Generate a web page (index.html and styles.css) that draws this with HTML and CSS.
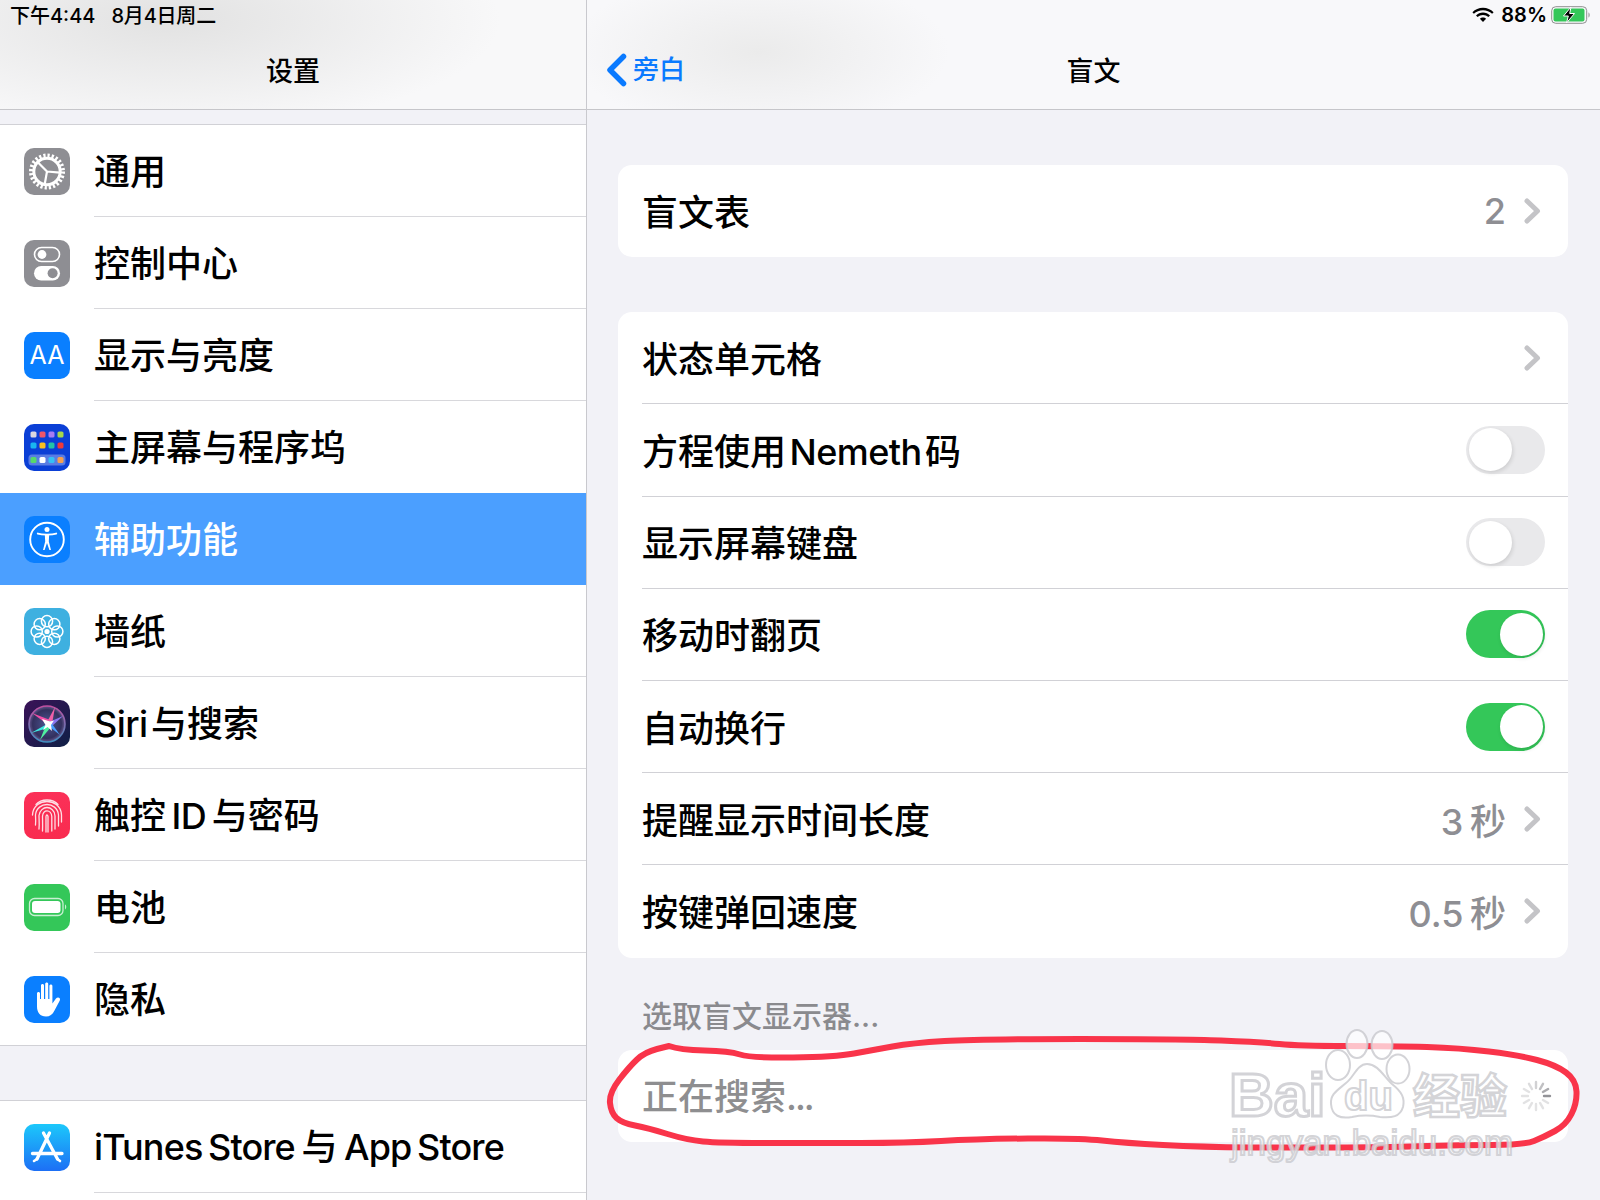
FILE: index.html
```html
<!DOCTYPE html>
<html lang="zh-CN">
<head>
<meta charset="utf-8">
<title>盲文</title>
<link rel="stylesheet" href="styles.css">
</head>
<body>
<div class="ipad">
  <aside class="sidebar">
    <header class="bar bar-left">
      <div class="status"><span>下午4:44</span><span class="date">8月4日周二</span></div>
      <div class="nav"><span class="title">设置</span></div>
    </header>
    <section class="group first">
      <div class="row">
        <svg class="icon" viewBox="0 0 46 47"><rect width="46" height="47" fill="#8e8e93"/><circle cx="23" cy="23.5" r="16" fill="none" stroke="#fff" stroke-width="4" stroke-dasharray="2.2 1.99"/><circle cx="23" cy="23.5" r="13.2" fill="none" stroke="#fff" stroke-width="3"/><path d="M23 23.5L36 24.6M23 23.5L20.7 36.3M23 23.5L13.8 14.3" stroke="#fff" stroke-width="2.200" fill="none"/></svg>
        <div class="row-body"><span class="text">通用</span></div>
      </div>
      <div class="row">
        <svg class="icon" viewBox="0 0 46 47"><rect width="46" height="47" fill="#8e8e93"/><rect x="10.5" y="7.5" width="25" height="14" rx="7" fill="none" stroke="#fff" stroke-width="1.6"/><circle cx="18" cy="14.5" r="4.4" fill="#fff"/><rect x="10" y="26" width="26" height="14.5" rx="7.2" fill="#fff"/><circle cx="28.6" cy="33.2" r="5" fill="#8e8e93"/></svg>
        <div class="row-body"><span class="text">控制中心</span></div>
      </div>
      <div class="row">
        <svg class="icon" viewBox="0 0 46 47"><rect width="46" height="47" fill="#0a7fff"/><text class="icon-aa" x="23" y="32" text-anchor="middle">AA</text></svg>
        <div class="row-body"><span class="text">显示与亮度</span></div>
      </div>
      <div class="row">
        <svg class="icon" viewBox="0 0 46 47"><rect width="46" height="47" fill="#0b3fd6"/><rect x="4.5" y="30.5" width="37" height="11" rx="3.5" fill="#fff" opacity=".32"/><g><rect x="6.5" y="7.5" width="6" height="6" rx="1.6" fill="#d8d8e0"/><rect x="15.5" y="7.5" width="6" height="6" rx="1.6" fill="#f0566a"/><rect x="24.5" y="7.5" width="6" height="6" rx="1.6" fill="#a77cf2"/><rect x="33.5" y="7.5" width="6" height="6" rx="1.6" fill="#a6d84a"/><rect x="6.5" y="18.5" width="6" height="6" rx="1.6" fill="#19b5f0"/><rect x="15.5" y="18.5" width="6" height="6" rx="1.6" fill="#f8c020"/><rect x="24.5" y="18.5" width="6" height="6" rx="1.6" fill="#22c3a6"/><rect x="33.5" y="18.5" width="6" height="6" rx="1.6" fill="#ee3a3a"/><rect x="6.5" y="33" width="6" height="6" rx="1.6" fill="#57d86a"/><rect x="15.5" y="33" width="6" height="6" rx="1.6" fill="#fff"/><rect x="24.5" y="33" width="6" height="6" rx="1.6" fill="#34c0f5"/><rect x="33.5" y="33" width="6" height="6" rx="1.6" fill="#f5a050"/></g></svg>
        <div class="row-body no-sep"><span class="text">主屏幕与程序坞</span></div>
      </div>
      <div class="row selected">
        <svg class="icon" viewBox="0 0 46 47"><rect width="46" height="47" fill="#0a7fff"/><circle cx="23" cy="23.5" r="16.8" fill="none" stroke="#fff" stroke-width="1.9"/><circle cx="23" cy="13.6" r="2.500" fill="#fff"/><path d="M13.800 17.600C18 19 28 19 32.200 17.600" fill="none" stroke="#fff" stroke-width="1.900" stroke-linecap="round"/><path d="M20.800 18.500H25.200L24.800 25.500L27 34H25.400L23 27L20.600 34H19L21.200 25.500Z" fill="#fff"/></svg>
        <div class="row-body no-sep"><span class="text">辅助功能</span></div>
      </div>
      <div class="row">
        <svg class="icon" viewBox="0 0 46 47"><rect width="46" height="47" fill="#3eb0e0"/><g fill="none" stroke="#fff" stroke-width="1.5"><circle cx="23" cy="13.2" r="5.6"/><circle cx="30.3" cy="16.2" r="5.6"/><circle cx="33.3" cy="23.5" r="5.6"/><circle cx="30.3" cy="30.8" r="5.6"/><circle cx="23" cy="33.8" r="5.6"/><circle cx="15.7" cy="30.8" r="5.6"/><circle cx="12.7" cy="23.5" r="5.6"/><circle cx="15.7" cy="16.2" r="5.6"/></g><circle cx="23" cy="23.5" r="2.6" fill="#fff"/></svg>
        <div class="row-body"><span class="text">墙纸</span></div>
      </div>
      <div class="row">
        <svg class="icon" viewBox="0 0 46 47"><defs><linearGradient id="siriBg" x1="0" y1="0" x2="1" y2="1"><stop offset="0" stop-color="#3a1258"/><stop offset="1" stop-color="#0f2046"/></linearGradient><linearGradient id="siriRing" x1="0" y1="0" x2="0" y2="1"><stop offset="0" stop-color="#c04fa0"/><stop offset="1" stop-color="#3f8fc0"/></linearGradient><radialGradient id="siriOrb"><stop offset="0" stop-color="#4c5590"/><stop offset=".8" stop-color="#33305e"/><stop offset="1" stop-color="#66588f"/></radialGradient></defs><rect width="46" height="47" fill="url(#siriBg)"/><circle cx="23" cy="24" r="18" fill="url(#siriOrb)" stroke="url(#siriRing)" stroke-width="1.600"/><g class="siri-rays"><path d="M23 24L8 13L26 20Z" fill="#f24fa8"/><path d="M22 24L31 7L28 24Z" fill="#f060a8"/><path d="M23 23L39 16L27 27Z" fill="#8a78f0"/><path d="M25 23L7 33L24 28Z" fill="#3ee8e0"/><path d="M22 25L16 40L27 27Z" fill="#50f0a0"/><path d="M22 24L36 35L26 21Z" fill="#4aa0ff"/></g><path d="M18 19L26 21.500L30 20.500L27 25L28 31L23.500 27L19 30L21.500 25Z" fill="#fff"/></svg>
        <div class="row-body"><span class="text mixed"><span class="lat">Siri</span> 与搜索</span></div>
      </div>
      <div class="row">
        <svg class="icon" viewBox="0 0 46 47"><defs><linearGradient id="fpBg" x1="0" y1="0" x2="0" y2="1"><stop offset="0" stop-color="#fb3058"/><stop offset="1" stop-color="#f92b4f"/></linearGradient></defs><rect width="46" height="47" fill="url(#fpBg)"/><g fill="none" stroke="#fff" stroke-width="1.300" opacity=".85" stroke-linecap="round"><path d="M12 12.500C17 6.500 29 6.500 34 12.500"/><path d="M8.500 23C9 13 17 9.500 23 9.500S37 13 37.500 23V30"/><path d="M11.500 33C12 28 11.500 25 11.500 23C12 16 18 12.500 23 12.500S34 16 34.500 23V34"/><path d="M15 37C15.500 32 15 27 15 23.500C15.500 18.500 19.500 15.500 23 15.500S31 18.500 31 24V37"/><path d="M18.500 39C18.800 33 18.500 28 18.500 24C19 20.500 21 18.800 23 18.800S27.500 20.500 27.800 24.500V39"/><path d="M22 40C22 33 22 27 22 24.500C22.300 22.500 23.500 22.500 24 24.500V40"/></g></svg>
        <div class="row-body"><span class="text mixed roomy">触控 <span class="lat">ID</span> 与密码</span></div>
      </div>
      <div class="row">
        <svg class="icon" viewBox="0 0 46 47"><rect width="46" height="47" fill="#34c759"/><rect x="5.500" y="14.500" width="33.500" height="17" rx="5" fill="none" stroke="#c9f0d3" stroke-width="1.300"/><rect x="8" y="17" width="28.500" height="12" rx="3" fill="#fff"/><path d="M41 20.500C42.500 21 42.800 24.500 41 25.500Z" fill="#c9f0d3"/></svg>
        <div class="row-body"><span class="text">电池</span></div>
      </div>
      <div class="row">
        <svg class="icon" viewBox="0 0 46 47"><rect width="46" height="47" fill="#0a7fff"/><path d="M13 17.500C13 15.500 16 15.500 16 17.500V23H17V9.500C17 7.500 20 7.500 20 9.500V23H21.200V8C21.200 6 24.200 6 24.200 8V23H25.400V10C25.400 8 28.400 8 28.400 10V27.500L32 22.500C33.500 20.500 37 21.500 35.800 24.500L30.500 34.500C28.500 38.500 25.800 40.500 22 40.500C16 40.500 13 36.500 13 30.500Z" fill="#fff"/></svg>
        <div class="row-body no-sep"><span class="text">隐私</span></div>
      </div>
    </section>
    <section class="group second">
      <div class="row">
        <svg class="icon" viewBox="0 0 46 47"><defs><linearGradient id="asBg" x1="0" y1="0" x2="0" y2="1"><stop offset="0" stop-color="#1cc8fb"/><stop offset="1" stop-color="#1d6ff5"/></linearGradient></defs><rect width="46" height="47" fill="url(#asBg)"/><path d="M25.500 9L13 35M19.500 9L33.500 35M8.500 29.500H38" stroke="#fff" stroke-width="3.300" stroke-linecap="round" fill="none"/><path d="M10 37L13 35M36 37L33.500 35" stroke="#fff" stroke-width="2.600" stroke-linecap="round"/></svg>
        <div class="row-body"><span class="text spaced"><span class="lat">iTunes Store</span> 与 <span class="lat">App Store</span></span></div>
      </div>
    </section>
  </aside>

  <main class="detail">
    <header class="bar bar-right">
      <div class="status status-right">
        <svg class="wifi" viewBox="0 0 22 16"><path d="M11 3.200C7.500 3.200 4.300 4.500 1.900 6.800L0.400 5.200C3.200 2.400 6.900 0.800 11 0.800S18.800 2.400 21.600 5.200L20.100 6.800C17.700 4.500 14.500 3.200 11 3.200Z"/><path d="M11 8C9 8 7.100 8.800 5.600 10.100L4 8.500C5.900 6.700 8.300 5.600 11 5.600S16.100 6.700 18 8.500L16.400 10.100C14.900 8.800 13 8 11 8Z"/><path d="M11 10.400C12.200 10.400 13.300 10.900 14.100 11.700L11 15L7.900 11.700C8.700 10.900 9.800 10.400 11 10.400Z"/></svg>
        <span class="percent">88%</span>
        <svg class="battery" viewBox="0 0 40 18"><rect x="0.700" y="0.700" width="35" height="16.600" rx="4" fill="none" stroke="#8e8e8e" stroke-width="1"/><rect x="2.500" y="2.500" width="31" height="13" rx="2" fill="#34c759"/><path d="M37.500 6.500C39 7 39 11 37.500 11.500Z" fill="#8e8e8e"/><path d="M20 1L12.500 10H17.300L15.500 17L23.500 7.500H18.700Z" fill="#000" stroke="#fff" stroke-width="1"/></svg>
      </div>
      <div class="nav">
        <a class="back"><svg class="back-chevron" viewBox="0 0 21 34"><path d="M17.500 3.500L4 17L17.500 30.500" fill="none" stroke="#0a7aff" stroke-width="5.500" stroke-linecap="round" stroke-linejoin="round"/></svg><span>旁白</span></a>
        <span class="title">盲文</span>
      </div>
    </header>

    <section class="card card-one">
      <div class="item last"><div class="item-body"><span class="name">盲文表</span><span class="value">2</span><svg class="chev" viewBox="0 0 17 26"><path d="M3 3L13.500 13L3 23" fill="none" stroke="#c4c4c7" stroke-width="5" stroke-linecap="round" stroke-linejoin="round"/></svg></div></div>
    </section>

    <section class="card card-two">
      <div class="item"><div class="item-body"><span class="name">状态单元格</span><svg class="chev" viewBox="0 0 17 26"><path d="M3 3L13.500 13L3 23" fill="none" stroke="#c4c4c7" stroke-width="5" stroke-linecap="round" stroke-linejoin="round"/></svg></div></div>
      <div class="item"><div class="item-body"><span class="name mixed">方程使用 <span class="lat">Nemeth</span> 码</span><span class="switch"><i class="knob"></i></span></div></div>
      <div class="item"><div class="item-body"><span class="name">显示屏幕键盘</span><span class="switch"><i class="knob"></i></span></div></div>
      <div class="item"><div class="item-body"><span class="name">移动时翻页</span><span class="switch on"><i class="knob"></i></span></div></div>
      <div class="item"><div class="item-body"><span class="name">自动换行</span><span class="switch on"><i class="knob"></i></span></div></div>
      <div class="item"><div class="item-body"><span class="name">提醒显示时间长度</span><span class="value">3 秒</span><svg class="chev" viewBox="0 0 17 26"><path d="M3 3L13.500 13L3 23" fill="none" stroke="#c4c4c7" stroke-width="5" stroke-linecap="round" stroke-linejoin="round"/></svg></div></div>
      <div class="item last"><div class="item-body"><span class="name">按键弹回速度</span><span class="value">0.5 秒</span><svg class="chev" viewBox="0 0 17 26"><path d="M3 3L13.500 13L3 23" fill="none" stroke="#c4c4c7" stroke-width="5" stroke-linecap="round" stroke-linejoin="round"/></svg></div></div>
    </section>

    <div class="section-label">选取盲文显示器...</div>

    <section class="card">
      <div class="item last"><div class="item-body"><span class="name muted">正在搜索<span class="dots">...</span></span>
        <svg class="spinner" viewBox="-16 -16 32 32"><g stroke="#8e8e93" stroke-width="2.400" stroke-linecap="round"><line x1="8" x2="14" opacity=".95"/><line x1="8" x2="14" transform="rotate(30)" opacity=".25"/><line x1="8" x2="14" transform="rotate(60)" opacity=".25"/><line x1="8" x2="14" transform="rotate(90)" opacity=".25"/><line x1="8" x2="14" transform="rotate(120)" opacity=".25"/><line x1="8" x2="14" transform="rotate(150)" opacity=".25"/><line x1="8" x2="14" transform="rotate(180)" opacity=".25"/><line x1="8" x2="14" transform="rotate(210)" opacity=".25"/><line x1="8" x2="14" transform="rotate(240)" opacity=".3"/><line x1="8" x2="14" transform="rotate(270)" opacity=".4"/><line x1="8" x2="14" transform="rotate(300)" opacity=".55"/><line x1="8" x2="14" transform="rotate(330)" opacity=".75"/></g></svg>
      </div></div>
    </section>
  </main>
</div>

<svg class="annotation" viewBox="0 0 1600 1200">
  <path class="scribble" d="M657,1049 Q645,1052 637,1059.5 Q629,1067 619,1080 Q609,1093 610,1103 Q611,1113 616.5,1118 Q622,1123 635,1125.5 Q648,1128 667.5,1134 Q687,1140 703,1141.5 Q719,1143 767,1143 L861,1143 Q906,1143 941,1141 Q977,1139 1028,1138.5 Q1080,1138 1102,1140.5 Q1125,1143 1163,1145 Q1202,1147 1250,1147.5 L1347,1147.5 Q1395,1147 1427,1146 Q1460,1145 1492,1145 Q1524,1145 1534,1141 Q1544,1137 1555,1131 Q1566,1125 1571.5,1114 Q1577,1103 1576.5,1091.5 Q1576,1080 1566,1072.5 Q1556,1065 1537,1060 Q1518,1055 1489,1051.5 Q1460,1048 1427,1047 Q1395,1046 1347,1046 Q1299,1046 1279.5,1044 Q1260,1042 1221,1040.5 Q1183,1039 1080,1039 Q977,1039 944.5,1041 Q912,1043 892.5,1046.5 Q873,1050 854,1053.5 Q835,1057 793,1057.5 Q751,1058 740,1054.5 Q729,1051 704.5,1050.5 Q680,1050 669,1046 L657,1049"/>
  <g class="mark">
    <ellipse cx="1357" cy="1044" rx="10.500" ry="14"/>
    <ellipse cx="1382" cy="1045" rx="10.500" ry="14"/>
    <ellipse cx="1338" cy="1065" rx="12" ry="15"/>
    <ellipse cx="1398" cy="1069" rx="11.500" ry="14.500"/>
    <path d="M1367,1064 C1378,1064 1384,1077 1392,1084 C1402,1092 1405,1098 1403,1107 C1400,1117 1392,1118 1380,1117 C1370,1115 1362,1115 1352,1117 C1340,1119 1332,1116 1331,1104 C1330,1094 1338,1090 1346,1083 C1354,1077 1357,1064 1367,1064Z"/>
    <text class="mark-latin mark-big" x="1229" y="1116">Bai</text>
    <text class="mark-latin mark-du" x="1344" y="1110">du</text>
    <text class="mark-cjk" x="1413" y="1113">经验</text>
    <text class="mark-latin mark-url" x="1231" y="1155">jingyan.baidu.com</text>
  </g>
</svg>
</body>
</html>
```

FILE: styles.css
```css
* { box-sizing: border-box; }
html, body { margin: 0; height: 100%; }
body {
  width: 1600px;
  height: 1200px;
  overflow: hidden;
  position: relative;
  font-family: Inter, "Noto Sans CJK SC", sans-serif;
  font-weight: 500;
  color: #000;
  background: #f2f2f7;
}
.ipad { display: flex; width: 1600px; height: 1200px; }

.sidebar {
  width: 587px;
  height: 1200px;
  display: flex;
  flex-direction: column;
  background: #f2f2f7;
  border-right: 1px solid #c9c9ce;
}
.detail { flex: 1; display: flex; flex-direction: column; }

.bar {
  height: 110px;
  flex: none;
  border-bottom: 1px solid #c6c6ca;
  display: flex;
  flex-direction: column;
}
.bar-left {
  background:
    radial-gradient(ellipse 330px 110px at 170px 20px, #e2e2e2 0%, rgba(226,226,226,0) 100%),
    #f8f8f9;
}
.bar-right {
  background:
    radial-gradient(ellipse 190px 80px at 172px 52px, #ebebeb 0%, rgba(235,235,235,0) 100%),
    #f8f8fa;
}
.status {
  height: 29px;
  flex: none;
  display: flex;
  align-items: center;
  padding-left: 10px;
  font-size: 20px;
}
.date { margin-left: 16px; letter-spacing: -0.2px; }
.status-right { justify-content: flex-end; padding: 0 9px 0 0; }
.wifi { width: 22px; height: 16px; margin-right: 7px; fill: #000; }
.percent { margin-right: 4px; font-size: 20px; font-weight: 600; }
.battery { width: 40px; height: 18px; }

.nav {
  flex: 1;
  position: relative;
  display: flex;
  align-items: center;
  justify-content: center;
}
.title { font-size: 27px; }
.back {
  position: absolute;
  left: 19px;
  top: 24px;
  display: flex;
  align-items: center;
  gap: 6px;
  color: #0a7aff;
  font-size: 26px;
  line-height: 34px;
}
.back-chevron { width: 21px; height: 34px; }

.group { background: #fff; border-top: 1px solid #d1d1d6; }
.first { margin-top: 14px; border-bottom: 1px solid #d1d1d6; }
.second { margin-top: 54px; flex: 1; }

.row {
  height: 92px;
  flex: none;
  display: flex;
  align-items: center;
  gap: 24px;
  padding-left: 24px;
  font-size: 36px;
}
.row.selected { background: #4b9fff; color: #fff; }
.row-body {
  flex: 1;
  height: 100%;
  display: flex;
  align-items: center;
  border-bottom: 1px solid #d8d8dc;
}
.row-body.no-sep { border-bottom: 0; }
.text { padding-bottom: 4px; }
.lat { letter-spacing: -0.6px; }
.mixed { word-spacing: -6px; }
.mixed.roomy { word-spacing: -4px; }
.spaced { word-spacing: -3px; padding-bottom: 6px; }
.spaced .lat { letter-spacing: -0.9px; }
.icon { width: 46px; height: 47px; flex: none; border-radius: 10px; }
.icon-aa { font-size: 25px; font-weight: 400; fill: #fff; font-family: Inter, sans-serif; }
.siri-rays { filter: blur(.7px); }

.card {
  margin: 0 32px 0 31px;
  background: #fff;
  border-radius: 14px;
  overflow: hidden;
}
.card-one { margin-top: 55px; }
.card-two { margin-top: 55px; }
.item { height: 92.19px; padding-left: 24px; font-size: 36px; }
.item-body {
  height: 100%;
  display: flex;
  align-items: center;
  padding-right: 23px;
  border-bottom: 1px solid #d1d1d6;
}
.item.last .item-body { border-bottom: 0; }
.name { flex: 1; padding-bottom: 2px; }
.muted { color: #8e8e90; padding-bottom: 4px; }
.dots { letter-spacing: -2px; }
.value { color: #8e8e93; margin-right: 18px; word-spacing: -3px; }
.chev { width: 17px; height: 26px; margin-right: 4px; }
.spinner { width: 32px; height: 32px; margin-right: -7px; }

.switch {
  width: 79px;
  height: 48px;
  padding: 2.500px;
  border-radius: 24px;
  background: #e9e9eb;
  display: flex;
  justify-content: flex-start;
}
.switch.on { background: #34c759; justify-content: flex-end; }
.knob {
  width: 43px;
  height: 43px;
  border-radius: 50%;
  background: #fff;
  box-shadow: 1px 2px 4px rgba(0, 0, 0, .12);
}

.section-label {
  height: 92px;
  padding: 38px 0 0 55px;
  font-size: 30px;
  line-height: 40px;
  color: #8a8a8e;
}

.annotation {
  position: absolute;
  left: 0;
  top: 0;
  width: 1600px;
  height: 1200px;
  pointer-events: none;
}
.scribble {
  fill: none;
  stroke: #f9344a;
  stroke-width: 6;
  stroke-linecap: round;
  stroke-linejoin: round;
}
.mark {
  fill: rgba(255, 255, 255, .7);
  stroke: rgba(200, 200, 205, .8);
  stroke-width: 2;
}
.mark-latin { font-family: "Liberation Sans", sans-serif; }
.mark-big { font-size: 62px; font-weight: 700; stroke-width: 3; }
.mark-du { font-size: 40px; font-weight: 700; }
.mark-url { font-size: 35px; font-weight: 400; }
.mark-cjk { font-family: "Noto Sans CJK SC", sans-serif; font-size: 47px; font-weight: 700; stroke-width: 2.500; }
```
